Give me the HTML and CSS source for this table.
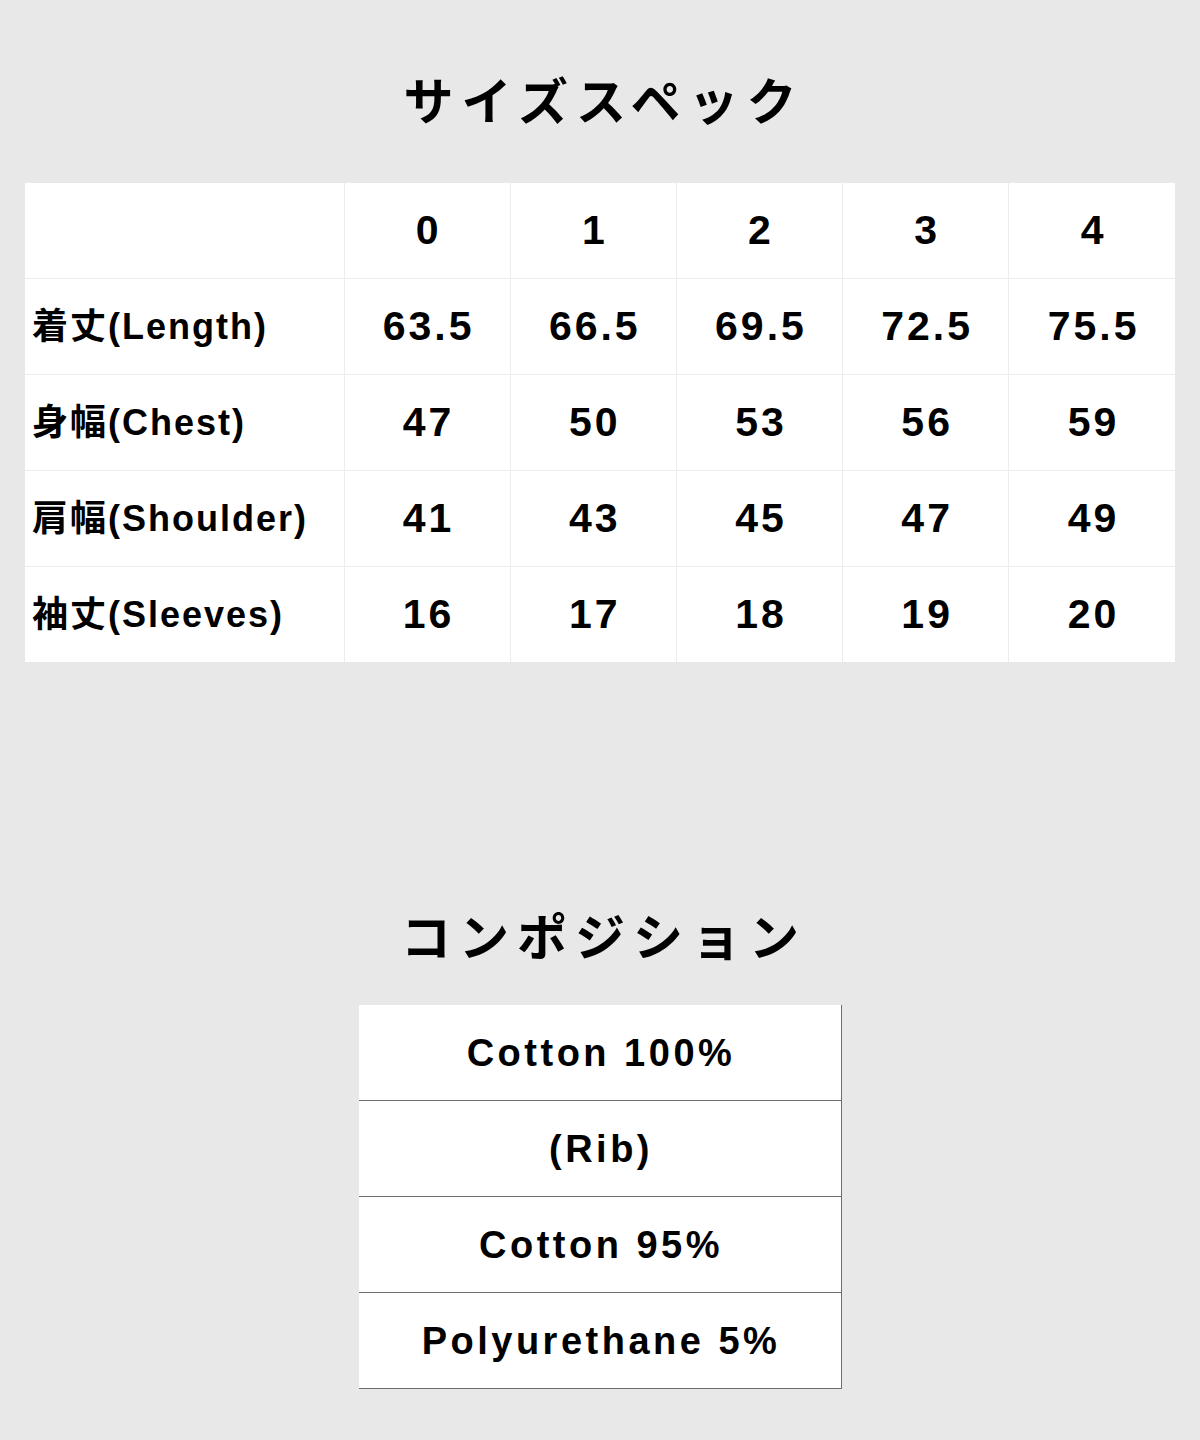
FILE: index.html
```html
<!DOCTYPE html>
<html lang="ja">
<head>
<meta charset="utf-8">
<link rel="stylesheet" href="styles.css">
</head>
<body>
<main class="page">
  <h2 class="title">サイズスペック</h2>
  <table class="spec">
    <colgroup>
      <col class="c-label"><col class="c-num"><col class="c-num"><col class="c-num"><col class="c-num"><col class="c-num">
    </colgroup>
    <tr class="head"><td></td><td>0</td><td>1</td><td>2</td><td>3</td><td>4</td></tr>
    <tr><td class="lbl">着丈(Length)</td><td>63.5</td><td>66.5</td><td>69.5</td><td>72.5</td><td>75.5</td></tr>
    <tr><td class="lbl">身幅(Chest)</td><td>47</td><td>50</td><td>53</td><td>56</td><td>59</td></tr>
    <tr><td class="lbl">肩幅(Shoulder)</td><td>41</td><td>43</td><td>45</td><td>47</td><td>49</td></tr>
    <tr><td class="lbl">袖丈(Sleeves)</td><td>16</td><td>17</td><td>18</td><td>19</td><td>20</td></tr>
  </table>

  <h2 class="title title2">コンポジション</h2>
  <table class="comp">
    <tr><td>Cotton 100%</td></tr>
    <tr><td>(Rib)</td></tr>
    <tr><td>Cotton 95%</td></tr>
    <tr><td>Polyurethane 5%</td></tr>
  </table>
</main>
</body>
</html>
```
FILE: styles.css
```css
html, body {
  margin: 0;
  padding: 0;
  background: #e8e8e8;
}
body {
  font-family: "Liberation Sans", "Noto Sans CJK JP", sans-serif;
  color: #000;
}
.page {
  display: flex;
  flex-direction: column;
  align-items: center;
  padding-top: 63px;
}
.title {
  margin: 0;
  font-family: "Noto Sans CJK JP", sans-serif;
  font-weight: 700;
  font-size: 50px;
  line-height: 70px;
  height: 70px;
  letter-spacing: 8px;
  padding-left: 8px;
}
.spec {
  margin-top: 50px;
  width: 1150px;
  border-collapse: collapse;
  background: #fff;
  table-layout: fixed;
}
.c-label { width: 319px; }
.spec td {
  height: 95px;
  padding: 0 0 0 3px;
  border: 1px solid #ececec;
  text-align: center;
  font-size: 41px;
  line-height: 1;
  font-weight: 700;
  letter-spacing: 3px;
}
.spec tr:first-child td { border-top: none; }
.spec tr:last-child td { border-bottom: none; }
.spec td:first-child { border-left: none; }
.spec td:last-child { border-right: none; }
.spec td.lbl {
  text-align: left;
  padding-left: 7px;
  font-size: 36px;
  letter-spacing: 2px;
}
.title2 {
  margin-top: 237px;
}
.comp {
  margin-top: 36px;
  width: 483px;
  border-collapse: collapse;
  background: #fff;
}
.comp td {
  height: 95px;
  padding: 0 0 0 3px;
  text-align: center;
  font-size: 38px;
  line-height: 1;
  font-weight: 700;
  letter-spacing: 3.5px;
  border-bottom: 1px solid #6e6e6e;
  border-right: 1px solid #6e6e6e;
}
```
